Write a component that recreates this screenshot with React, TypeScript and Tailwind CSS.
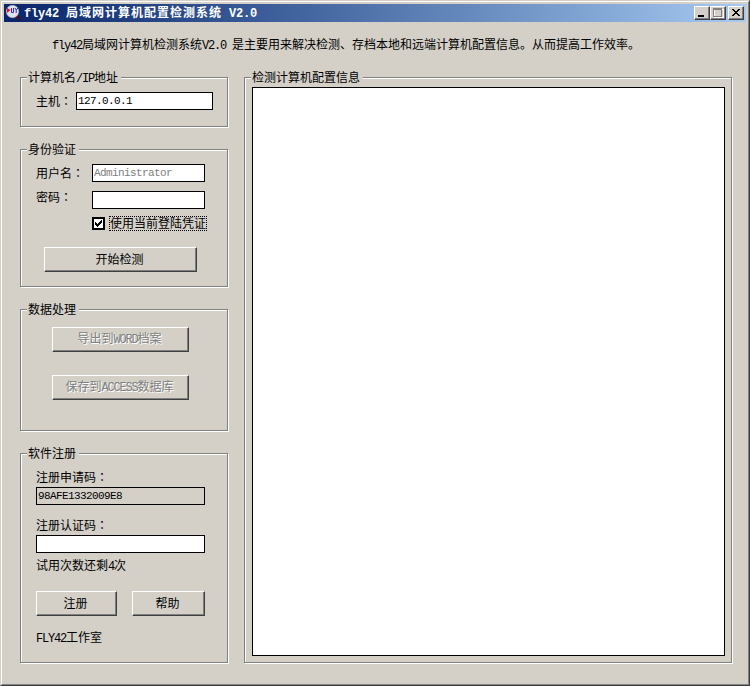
import React, { useState } from 'react';

// ASCII runs are set in a half-width face, the colon is centred in its cell
function Txt({ children, bold = false }: { children: string; bold?: boolean }) {
  const parts = children.split(/([\x20-\x7e]+|：)/).filter(Boolean);
  return (
    <span className={bold ? 'whitespace-pre font-bold tracking-[1px]' : 'whitespace-pre'}>
      {parts.map((part, idx) => {
        if (part === '：') {
          return <span key={idx} className="font-['Noto_Sans_CJK_TC',sans-serif]">{part}</span>;
        }
        if (/^[\x20-\x7e]/.test(part)) {
          return (
            <span
              key={idx}
              className={`font-['Liberation_Mono',monospace] ${bold ? 'tracking-[-0.2px]' : 'tracking-[-1.2px]'}`}
            >
              {part}
            </span>
          );
        }
        return <span key={idx}>{part}</span>;
      })}
    </span>
  );
}

function GroupBox({ title, className, children }: { title: string; className: string; children: React.ReactNode }) {
  return (
    <section className={`border border-[#808080] shadow-[inset_1px_1px_0_#fff,1px_1px_0_#fff] flex flex-col ${className}`}>
      <h2 className="self-start ml-[6px] -mt-2 h-4 pl-px pr-[3px] leading-[13px] bg-[#d4d0c8]">
        <Txt>{title}</Txt>
      </h2>
      {children}
    </section>
  );
}

interface PushButtonProps {
  label: string;
  className: string;
  disabled?: boolean;
}

function PushButton({ label, className, disabled }: PushButtonProps) {
  return (
    <button
      disabled={disabled}
      className={`h-[25px] shrink-0 flex items-center justify-center pb-[2px] pr-[2px] border-t border-l border-white border-r border-b border-r-[#404040] border-b-[#404040] shadow-[inset_-1px_-1px_0_#808080] ${
        disabled ? 'text-[#808080] [text-shadow:1px_1px_0_#fff]' : ''
      } ${className}`}
    >
      <Txt>{label}</Txt>
    </button>
  );
}

const fieldClass =
  "h-[18px] shrink-0 border border-black rounded-none pl-[1px] pb-[1px] outline-none font-['Liberation_Mono',monospace] text-[11px] tracking-[-0.6px]";

const captionClass =
  'w-4 h-[14px] flex items-center justify-center bg-[#d4d0c8] border border-white border-r-[#404040] border-b-[#404040] shadow-[inset_-1px_-1px_0_#808080]';

function TitleBar() {
  return (
    <header className="h-[18px] shrink-0 flex items-center pl-[2px] pr-[2px] bg-linear-to-r from-[#0a246a] to-[#a6caf0] text-white">
      <svg width="16" height="16" viewBox="0 0 16 16" className="mr-[2px]">
        <path d="M10.5 10.5l4 4" stroke="#5a0a10" strokeWidth="2" />
        <circle cx="6.5" cy="6.5" r="6.2" fill="#dfe2e8" stroke="#b4b8c2" strokeWidth="0.6" />
        <path d="M1 3l3.6 2L1 8z" fill="#e8101c" />
        <path d="M5.5 3v4.5h2M7.5 3v4.5M9 3l1.2 2L12 3M10.2 5v3" stroke="#2a2ad0" fill="none" />
      </svg>
      <h1 className="flex-1">
        <Txt bold>fly42 局域网计算机配置检测系统 V2.0</Txt>
      </h1>
      <button className={captionClass}>
        <svg width="14" height="12" viewBox="0 0 14 12" shapeRendering="crispEdges">
          <path d="M3 8h6v2H3z" fill="#000" />
        </svg>
      </button>
      <button className={captionClass}>
        <svg width="14" height="12" viewBox="0 0 14 12" shapeRendering="crispEdges">
          <path d="M3.5 2v8.5H12V2M3 2h9" stroke="#fff" fill="none" />
          <path d="M2 1h9v9H2zM3 3v6h7V3z" fill="#808080" fillRule="evenodd" />
        </svg>
      </button>
      <button className={`${captionClass} ml-[2px]`}>
        <svg width="14" height="12" viewBox="0 0 14 12" shapeRendering="crispEdges">
          <path d="M3 2h2v1h1v1h2V3h1V2h2v1h-1v1H9v1H8v1h1v1h1v1h1v1H9V8H8V7H6v1H5v1H3V8h1V7h1V6h1V5H5V4H4V3H3z" fill="#000" />
        </svg>
      </button>
    </header>
  );
}

export default function App() {
  const [host, setHost] = useState('127.0.0.1');
  const [password, setPassword] = useState('');
  const [useCurrent, setUseCurrent] = useState(true);
  const [regCode, setRegCode] = useState('');

  return (
    <div className="w-[750px] h-[686px] border-t border-l border-[#d4d0c8] border-r border-b border-r-[#404040] border-b-[#404040] bg-[#d4d0c8] text-black text-[12px] leading-4 font-['Noto_Sans_CJK_SC',sans-serif]">
      <div className="h-full flex flex-col border border-white border-r-[#808080] border-b-[#808080] p-[2px]">
        <TitleBar />

        <p className="ml-12 mt-[14px] h-[17px]">
          <Txt>fly42局域网计算机检测系统V2.0 是主要用来解决检测、存档本地和远端计算机配置信息。从而提高工作效率。</Txt>
        </p>

        <main className="flex gap-4 ml-4 mt-6">
          <div className="w-[208px] flex flex-col gap-[22px]">
            <GroupBox title="计算机名/IP地址" className="h-[50px]">
              <label className="flex pl-[15px] mt-[6px]">
                <span className="w-10 leading-[17px]"><Txt>主机：</Txt></span>
                <input className={`${fieldClass} w-[137px] bg-white`} value={host} onChange={(e) => setHost(e.target.value)} />
              </label>
            </GroupBox>

            <GroupBox title="身份验证" className="h-[138px]">
              <label className="flex pl-[15px] mt-[6px]">
                <span className="w-14 leading-[17px]"><Txt>用户名：</Txt></span>
                <input className={`${fieldClass} w-[113px] bg-white text-[#808080]`} value="Administrator" disabled readOnly />
              </label>
              <label className="flex pl-[15px] mt-[6px]">
                <span className="w-14 leading-[17px]"><Txt>密码：</Txt></span>
                <input
                  type="password"
                  className={`${fieldClass} w-[113px] mt-[3px] bg-white`}
                  value={password}
                  onChange={(e) => setPassword(e.target.value)}
                />
              </label>
              <button className="flex items-center pl-[71px] mt-[7px] h-[15px]" onClick={() => setUseCurrent(!useCurrent)}>
                <span className="w-[13px] h-[13px] mr-1 border-2 border-black bg-white">
                  {useCurrent && (
                    <svg width="9" height="9" viewBox="0 0 9 9" shapeRendering="crispEdges">
                      <path d="M1 3h1v1h1v1h1V4h1V3h1V2h1V1h1v3H7v1H6v1H5v1H4v1H3V7H2V6H1z" fill="#000" />
                    </svg>
                  )}
                </span>
                <span className="w-[98px] h-[15px] border border-dotted border-black leading-[11px]">
                  <Txt>使用当前登陆凭证</Txt>
                </span>
              </button>
              <PushButton label="开始检测" className="w-[153px] ml-[23px] mt-4" />
            </GroupBox>

            <GroupBox title="数据处理" className="h-[122px]">
              <PushButton label="导出到WORD档案" className="w-[137px] ml-[31px] mt-[9px]" disabled />
              <PushButton label="保存到ACCESS数据库" className="w-[137px] ml-[31px] mt-[23px]" disabled />
            </GroupBox>

            <GroupBox title="软件注册" className="h-[210px]">
              <div className="flex flex-col pl-[15px] mt-[6px]">
                <span className="h-[18px] leading-[17px]"><Txt>注册申请码：</Txt></span>
                <input className={`${fieldClass} w-[169px] mt-[1px] bg-[#d4d0c8]`} value="98AFE1332009E8" readOnly />
                <span className="h-[18px] mt-[11px] leading-[17px]"><Txt>注册认证码：</Txt></span>
                <input
                  className={`${fieldClass} w-[169px] mt-[1px] bg-white`}
                  value={regCode}
                  onChange={(e) => setRegCode(e.target.value)}
                />
                <span className="h-4 mt-1"><Txt>试用次数还剩4次</Txt></span>
                <div className="flex gap-[15px] mt-[18px]">
                  <PushButton label="注册" className="w-[81px]" />
                  <PushButton label="帮助" className="w-[73px]" />
                </div>
                <span className="h-4 mt-[13px]"><Txt>FLY42工作室</Txt></span>
              </div>
            </GroupBox>
          </div>

          <GroupBox title="检测计算机配置信息" className="w-[488px] h-[586px]">
            <textarea className="w-[473px] h-[569px] ml-[7px] mt-px resize-none border border-black bg-white outline-none" readOnly />
          </GroupBox>
        </main>
      </div>
    </div>
  );
}
